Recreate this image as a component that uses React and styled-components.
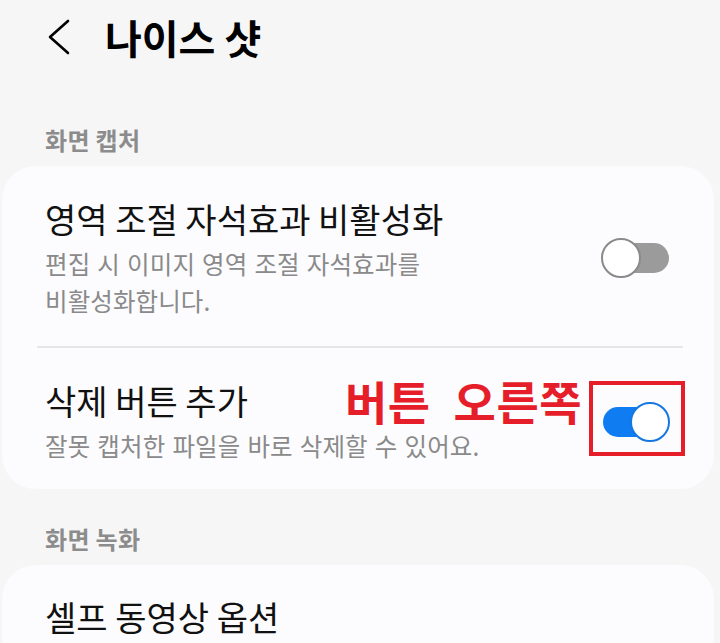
import React from "react";
import styled, { createGlobalStyle } from "styled-components";

const Global = createGlobalStyle`
  html, body { margin: 0; padding: 0; background: #f6f6f6; }
  body { width: 720px; height: 643px; overflow: hidden;
    font-family: "Noto Sans CJK KR", "Noto Sans", sans-serif; }
  * { box-sizing: border-box; }
`;

const Page = styled.div`
  width: 720px;
  min-height: 643px;
  background: #f6f6f6;
  display: flex;
  flex-direction: column;
`;

const Header = styled.header`
  height: 74px;
  display: flex;
  align-items: center;
  padding-left: 46px;
`;

const BackButton = styled.button`
  border: 0;
  background: none;
  padding: 0;
  width: 26px;
  height: 36px;
  display: flex;
  align-items: center;
  justify-content: center;
  margin-right: 33px;
`;

const Title = styled.h1`
  margin: 0;
  font-size: 40px;
  font-weight: 700;
  color: #000;
  line-height: 1;
  letter-spacing: 0;
`;

const SectionLabel = styled.div`
  padding-left: 45px;
  margin-top: ${(p) => p.$top}px;
  margin-bottom: 11px;
  height: 30px;
  line-height: 30px;
  font-size: 24px;
  font-weight: 700;
  color: #8c8c8c;
  letter-spacing: 0.3px;
`;

const Card = styled.section`
  margin: 0 6px 0 2px;
  background: #fcfcfe;
  border-radius: 34px;
  display: flex;
  flex-direction: column;
`;

const Row = styled.div`
  position: relative;
  display: flex;
  align-items: center;
  padding: ${(p) => p.$pt}px 45px ${(p) => p.$pb}px 43px;
`;

const Texts = styled.div`
  flex: 1;
  display: flex;
  flex-direction: column;
`;

const ItemTitle = styled.div`
  font-size: 34px;
  line-height: 44px;
  color: #111;
  letter-spacing: 0;
`;

const ItemSub = styled.div`
  margin-top: 4px;
  font-size: 24.5px;
  line-height: 37px;
  color: #8a8a8a;
  letter-spacing: 0.1px;
  word-spacing: 1.5px;
`;

const Divider = styled.div`
  height: 2px;
  background: #e6e6e8;
  margin: 0 31px 0 35px;
`;

const Track = styled.div`
  position: relative;
  width: 68px;
  height: 40px;
  flex-shrink: 0;
  &::before {
    content: "";
    position: absolute;
    left: 2px;
    right: 0;
    top: 5px;
    bottom: 5px;
    border-radius: 15px;
    background: ${(p) => (p.$on ? "#0f7cf2" : "#9b9b9b")};
  }
`;

const Thumb = styled.div`
  position: absolute;
  top: 0;
  ${(p) => (p.$on ? "right: -1px;" : "left: 0;")}
  width: 40px;
  height: 40px;
  border-radius: 50%;
  background: #fff;
  border: 2px solid ${(p) => (p.$on ? "#1577e0" : "#8a8a8a")};
`;

const Annotation = styled.div`
  position: absolute;
  left: 343px;
  top: 29px;
  font-size: 46px;
  line-height: 1;
  font-weight: 700;
  color: #e51e2a;
  letter-spacing: 0.5px;
  word-spacing: 12px;
  white-space: nowrap;
`;

const HighlightBox = styled.div`
  position: absolute;
  left: 587px;
  top: 33px;
  width: 96px;
  height: 75px;
  border: 4px solid #e51e2a;
`;

function Toggle({ on }) {
  return (
    <Track $on={on}>
      <Thumb $on={on} />
    </Track>
  );
}

export default function App() {
  return (
    <>
      <Global />
      <Page>
        <Header>
          <BackButton aria-label="back">
            <svg width="24" height="36" viewBox="0 0 24 36">
              <polyline
                points="21,2 3,18 21,34"
                fill="none"
                stroke="#000"
                strokeWidth="2.6"
                strokeLinecap="round"
                strokeLinejoin="round"
              />
            </svg>
          </BackButton>
          <Title>나이스 샷</Title>
        </Header>

        <SectionLabel $top={51}>화면 캡처</SectionLabel>
        <Card>
          <Row $pt={31} $pb={27}>
            <Texts>
              <ItemTitle>영역 조절 자석효과 비활성화</ItemTitle>
              <ItemSub>
                편집 시 이미지 영역 조절 자석효과를
                <br />
                비활성화합니다.
              </ItemSub>
            </Texts>
            <Toggle on={false} />
          </Row>
          <Divider />
          <Row $pt={31} $pb={25}>
            <Texts>
              <ItemTitle>삭제 버튼 추가</ItemTitle>
              <ItemSub>잘못 캡처한 파일을 바로 삭제할 수 있어요.</ItemSub>
            </Texts>
            <Toggle on={true} />
            <Annotation>버튼 오른쪽</Annotation>
            <HighlightBox />
          </Row>
        </Card>

        <SectionLabel $top={35}>화면 녹화</SectionLabel>
        <Card>
          <Row $pt={30} $pb={30}>
            <Texts>
              <ItemTitle>셀프 동영상 옵션</ItemTitle>
            </Texts>
          </Row>
        </Card>
      </Page>
    </>
  );
}
